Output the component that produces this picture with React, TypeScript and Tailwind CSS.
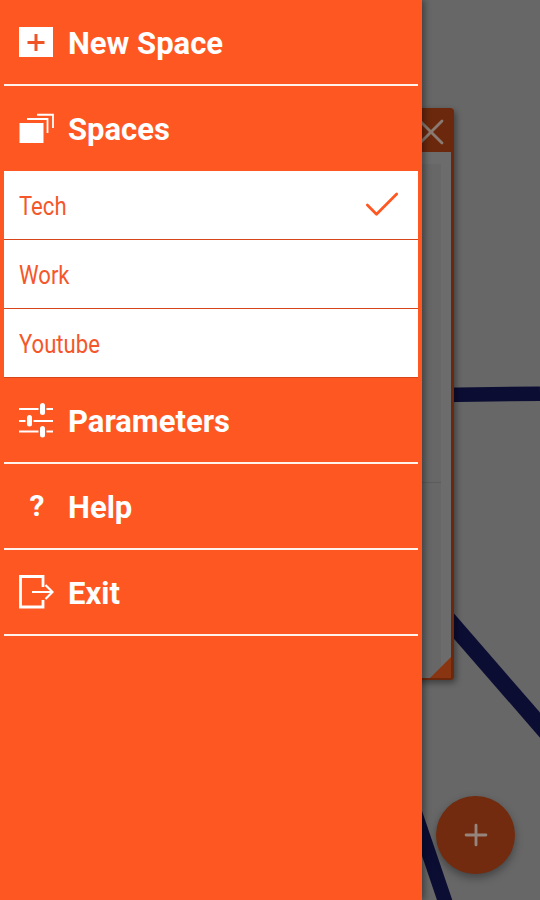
import { Check, Plus, X } from 'lucide-react'
import type { ReactNode } from 'react'

function NewSpaceIcon() {
  return (
    <svg width="36" height="32" viewBox="0 0 36 32">
      <rect x="1" y="1" width="34" height="30" fill="#fff" />
      <path d="M18 8v17M9.500 16.500h17" stroke="#ef5427" strokeWidth="3" fill="none" />
    </svg>
  )
}

function SpacesIcon() {
  return (
    <svg width="36" height="33" viewBox="0 0 36 33" fill="none">
      <rect x="1.500" y="11" width="24" height="20" fill="#fff" />
      <path d="M9 7h20.500v14" stroke="#fff" strokeWidth="1.800" />
      <path d="M19 2.750h16V16" stroke="#fff" strokeWidth="1.800" />
    </svg>
  )
}

function ParametersIcon() {
  return (
    <svg width="36" height="36" viewBox="0 0 36 36" fill="none">
      <path d="M1 7h19.500M28.500 7H35M1 19h6.500M15.500 19H35M1 29.500h19.500M28.500 29.500H35" stroke="#fff" strokeWidth="2" />
      <rect x="22" y="1" width="5" height="12" rx="2.500" fill="#fff" />
      <rect x="9" y="13" width="5" height="11.500" rx="2.500" fill="#fff" />
      <rect x="22" y="24" width="5" height="11.500" rx="2.500" fill="#fff" />
    </svg>
  )
}

function ExitIcon() {
  return (
    <svg width="36" height="36" viewBox="0 0 36 36" fill="none">
      <path d="M25 13V2.500H2.500V33H25V26" stroke="#fff" strokeWidth="2.800" />
      <path d="M14 18h20M27.500 11l7 7-7 7" stroke="#fff" strokeWidth="2.200" />
    </svg>
  )
}

function MenuRow({ icon, label, divider }: { icon: ReactNode; label: string; divider?: boolean }) {
  return (
    <div className={`flex h-[86px] items-center ${divider ? 'border-b-2 border-[#fff3ec]' : ''}`}>
      <div className="flex w-[64px] items-center pl-[14px]">{icon}</div>
      <span className="mt-[2px] text-[31px] font-bold leading-none text-white">{label}</span>
    </div>
  )
}

function SpaceRow({ name, active }: { name: string; active?: boolean }) {
  return (
    <div className="flex h-[69px] items-center justify-between border-b border-[#d8451a] bg-white pl-[15px] pr-[14px]">
      <span className="mt-[2px] origin-left scale-x-[0.85] text-[26px] text-[#f4572a]">{name}</span>
      {active && <Check size={44} strokeWidth={1.500} className="text-[#ff5722]" />}
    </div>
  )
}

export default function App() {
  return (
    <div className="relative flex h-[900px] w-[540px] overflow-hidden bg-[#676767] font-['Roboto',sans-serif]">
      {/* lines of the map under the dimmed page */}
      <svg className="absolute inset-0" width="540" height="900" viewBox="0 0 540 900">
        <path d="M440 395 L540 393.700" stroke="#0b0d33" strokeWidth="14.500" fill="none" />
        <path d="M440 610 L546 732" stroke="#0b0d33" strokeWidth="16.500" fill="none" />
        <path d="M410 798 L447 907" stroke="#0b0d33" strokeWidth="14.500" fill="none" />
      </svg>

      {/* card behind the drawer */}
      <div className="absolute left-[380px] top-[108px] flex h-[572px] w-[74px] flex-col overflow-hidden rounded-sm bg-[#6b280d] shadow-[2px_3px_6px_rgba(0,0,0,0.4)]">
        <div className="flex h-[44px] items-center justify-end pr-px pt-[4px] text-[#8a7b72]">
          <X size={44} strokeWidth={1.500} />
        </div>
        <div className="relative mb-[2px] mr-[3px] flex-1 bg-[#6c6c6c] pr-[10px] pt-[12px]">
          <div className="h-[319px] border-b border-[#5c5c5c] bg-[#676767]" />
          <div className="h-[195px] bg-[#676767]" />
          <svg className="absolute bottom-0 right-0" width="21" height="21" viewBox="0 0 21 21">
            <path d="M21 0V21H0Z" fill="#8a3512" />
          </svg>
        </div>
      </div>

      {/* add button */}
      <div className="absolute left-[436px] top-[796px] flex h-[78px] w-[79px] items-center justify-center rounded-full bg-[#722b0e] text-[#95857c] shadow-[0_4px_8px_rgba(0,0,0,0.35)]">
        <Plus size={34} strokeWidth={2} />
      </div>

      {/* drawer */}
      <div className="relative z-10 h-full w-[422px] bg-[#ff5722] px-[4px] shadow-[3px_0_6px_rgba(0,0,0,0.35)]">
        <MenuRow icon={<NewSpaceIcon />} label="New Space" divider />
        <div className="flex h-[85px] items-center">
          <div className="flex w-[64px] items-center pl-[14px]">
            <SpacesIcon />
          </div>
          <span className="mt-[2px] text-[31px] font-bold leading-none text-white">Spaces</span>
        </div>
        <SpaceRow name="Tech" active />
        <SpaceRow name="Work" />
        <SpaceRow name="Youtube" />
        <MenuRow icon={<ParametersIcon />} label="Parameters" divider />
        <MenuRow
          icon={<span className="w-[36px] pl-[2px] text-center text-[30px] font-bold leading-none text-white">?</span>}
          label="Help"
          divider
        />
        <MenuRow icon={<ExitIcon />} label="Exit" divider />
      </div>
    </div>
  )
}
